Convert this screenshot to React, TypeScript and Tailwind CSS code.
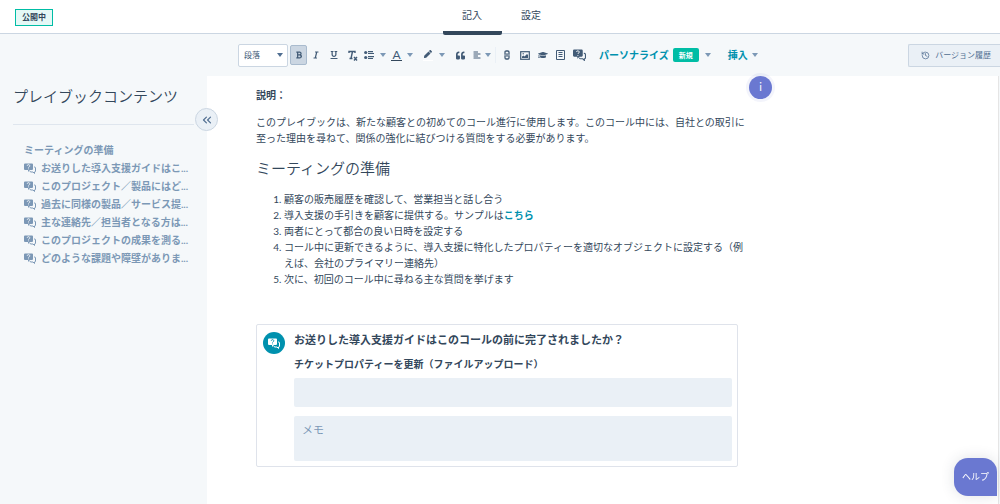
import type { ReactNode } from "react";
import { clsx } from "clsx";
import { ChevronsLeft, History } from "lucide-react";
import { FaBold, FaItalic, FaUnderline, FaQuoteLeft, FaAlignLeft, FaGraduationCap, FaPen } from "react-icons/fa";

const outline = [
  "お送りした導入支援ガイドはこ...",
  "このプロジェクト／製品にはど...",
  "過去に同様の製品／サービス提...",
  "主な連絡先／担当者となる方は...",
  "このプロジェクトの成果を測る...",
  "どのような課題や障壁がありま...",
];

function Caret({ className }: { className?: string }) {
  return (
    <svg viewBox="0 0 6 4" className={clsx("h-1 w-[6px] shrink-0", className ?? "fill-[#7c98b6]")} aria-hidden="true">
      <path d="M0 0h6L3 4z" />
    </svg>
  );
}

function QuestionIcon({ mark, className }: { mark: string; className?: string }) {
  return (
    <svg viewBox="0 0 24 22" className={clsx("shrink-0 fill-current", className)} aria-hidden="true">
      <path d="M2 1h14a2 2 0 0 1 2 2v9a2 2 0 0 1-2 2h-4l-4 4v-4H2a2 2 0 0 1-2-2V3a2 2 0 0 1 2-2z" />
      <path d="M20 8h1a2 2 0 0 1 2 2v6a2 2 0 0 1-2 2v3l-3-3h-4a2 2 0 0 1-2-2" fill="none" stroke="currentColor" strokeWidth="2" />
      <path d="M6.500 5.500a2.500 2.300 0 1 1 3.500 2.200c-.7.400-1 .700-1 1.500M9 11v1.600" fill="none" stroke={mark} strokeWidth="1.800" />
    </svg>
  );
}

function ClearIcon() {
  return (
    <svg viewBox="0 0 11 11" className="size-[11px]" fill="none" stroke="currentColor" strokeWidth="1.400" aria-hidden="true">
      <path d="M2 3V1.500h6V3M5.500 1.500 4 8.500M2.500 8.500h3M7 7l3 3.500M10 7l-3 3.500" />
    </svg>
  );
}

function ListIcon() {
  return (
    <svg viewBox="0 0 10 10" className="size-[10px] fill-current" aria-hidden="true">
      <circle cx="1.700" cy="2.500" r="1.600" />
      <circle cx="1.700" cy="7.500" r="1.600" />
      <path d="M4 1h5v1.200H4zM4 3h6v1H4zM4 6h6v1.200H4zM4 8h5v1H4z" />
    </svg>
  );
}

function LinkIcon() {
  return (
    <svg viewBox="0 0 6 10" className="h-[10px] w-[6px]" fill="none" stroke="currentColor" strokeWidth="1.300" aria-hidden="true">
      <path d="M1.800 4.200H1V2.200Q1 1 2.200 1h1.600Q5 1 5 2.200v2h-.8M1.800 5.800H1v2Q1 9 2.200 9h1.600Q5 9 5 7.800v-2h-.8M3 3.200v3.600" />
    </svg>
  );
}

function ImageIcon() {
  return (
    <svg viewBox="0 0 10 9" className="h-[9px] w-[10px]" aria-hidden="true">
      <rect x=".7" y=".7" width="8.600" height="7.600" fill="none" stroke="currentColor" strokeWidth="1.200" />
      <path d="M2 7V5.500l1.500-1 1 1L7 3l1 1v3z" fill="currentColor" />
      <circle cx="3.200" cy="2.800" r=".7" fill="currentColor" />
    </svg>
  );
}

function SnippetIcon() {
  return (
    <svg viewBox="0 0 9 10" className="h-[10px] w-[9px]" fill="none" stroke="currentColor" aria-hidden="true">
      <path d="M.500.500h8v9h-8zM2.500 2.500h4M2.500 4.500h4M2.500 6.500h4" />
    </svg>
  );
}

function Tool({ label, active, className, children }: { label: string; active?: boolean; className?: string; children: ReactNode }) {
  return (
    <button
      type="button"
      aria-label={label}
      className={clsx(
        "flex h-5 shrink-0 items-center justify-center",
        active && "rounded-[2px] border border-[#a9bbce] bg-[#cbd6e2]",
        className ?? "w-[18px]"
      )}
    >
      {children}
    </button>
  );
}

function Header() {
  return (
    <header className="grid h-[34px] shrink-0 grid-cols-[1fr_auto_1fr] border-b border-[#cbd6e2] bg-white pl-[15px]">
      <div className="flex items-center">
        <span className="border border-[#00bda5] bg-[#e5f8f6] px-[6px] text-[8px] leading-[15px] font-bold">公開中</span>
      </div>
      <nav className="-ml-3 flex text-[10px]">
        <a href="#edit" aria-current="page" className="flex h-[35px] w-[59px] items-center justify-center rounded-[2px] border-b-4 border-[#33475b]">
          記入
        </a>
        <a href="#settings" className="flex h-[35px] w-[59px] items-center justify-center border-b-4 border-transparent">
          設定
        </a>
      </nav>
    </header>
  );
}

function Sidebar() {
  return (
    <aside className="relative w-[207px] shrink-0 px-[13px] pt-[50px]">
      <h1 className="border-b border-[#dfe6ee] pb-4 text-[15px] leading-6 font-[350] whitespace-nowrap">プレイブックコンテンツ</h1>
      <button
        type="button"
        aria-label="サイドバーを閉じる"
        className="absolute top-[74px] -right-[11px] z-10 flex size-[23px] items-center justify-center rounded-full border border-[#cbd6e2] bg-[#eaf0f6] text-[#506e91]"
      >
        <ChevronsLeft size={14} strokeWidth={2} />
      </button>
      <nav className="mt-4 pl-[11px] text-[10px] leading-[18px] font-bold text-[#7c98b6]">
        <a href="#prep" className="block">ミーティングの準備</a>
        <ul>
          {outline.map((title) => (
            <li key={title}>
              <a href="#question" className="flex items-center gap-[5px] whitespace-nowrap">
                <QuestionIcon mark="#f5f8fa" className="h-[11px] w-3" />
                {title}
              </a>
            </li>
          ))}
        </ul>
      </nav>
    </aside>
  );
}

function Toolbar() {
  return (
    <div className="flex h-[42px] shrink-0 items-center pl-[31px] text-[#425b76]">
      <div className="relative mr-[2px] flex items-center">
        <select aria-label="スタイル" className="h-[23px] w-[50px] appearance-none rounded-[2px] border border-[#cbd6e2] bg-white pl-[5px] text-[8px]">
          <option>段落</option>
        </select>
        <Caret className="pointer-events-none absolute right-[5px] fill-[#506e91]" />
      </div>
      <Tool label="太字" active className="w-[17px]"><FaBold size={8} /></Tool>
      <Tool label="斜体"><FaItalic size={8} /></Tool>
      <Tool label="下線"><FaUnderline size={8} /></Tool>
      <Tool label="書式をクリア"><ClearIcon /></Tool>
      <Tool label="リスト" className="w-[27px] gap-[6px]"><ListIcon /><Caret /></Tool>
      <Tool label="文字色" className="w-[28px] gap-[5px]">
        <span className="border-b border-[#33475b] px-px text-[12px] leading-[11px]">A</span>
        <Caret />
      </Tool>
      <Tool label="背景色" className="ml-1 w-[27px] gap-[6px]">
        <span className="border-b border-white px-px pb-[2px]"><FaPen size={8} /></span>
        <Caret />
      </Tool>
      <Tool label="引用" className="ml-[4px] w-[18px]"><FaQuoteLeft size={9} /></Tool>
      <Tool label="配置" className="ml-[3px] w-[20px] gap-1"><FaAlignLeft size={8} /><Caret /></Tool>
      <span className="mr-[2px] ml-[3px] h-4 w-px shrink-0 bg-[#eaf0f6]" />
      <Tool label="リンク"><LinkIcon /></Tool>
      <Tool label="画像"><ImageIcon /></Tool>
      <Tool label="ナレッジ"><FaGraduationCap size={10} /></Tool>
      <Tool label="スニペット" className="w-[17px]"><SnippetIcon /></Tool>
      <Tool label="質問" className="mr-[9px] w-[21px]"><QuestionIcon mark="#f5f8fa" className="h-3 w-[13px]" /></Tool>
      <button type="button" className="flex shrink-0 items-center gap-1 text-[10px] font-bold text-[#0091ae]">
        パーソナライズ
        <span className="rounded-[2px] bg-[#00bda5] px-[6px] text-[7px] leading-[14px] font-bold text-white">新規</span>
        <span className="pl-[2px]"><Caret /></span>
      </button>
      <button type="button" className="ml-[17px] flex shrink-0 items-center gap-1 text-[10px] font-bold text-[#0091ae]">
        挿入
        <Caret />
      </button>
      <button type="button" className="ml-auto flex h-[23px] shrink-0 items-center gap-[5px] rounded-l-[2px] border border-r-0 border-[#cbd6e2] bg-[#eaf0f6] pr-[9px] pl-[12px] text-[8px] text-[#506e91]">
        <History size={9} />
        バージョン履歴
      </button>
    </div>
  );
}

function QuestionCard() {
  return (
    <section id="question" className="mt-[37px] mr-[10px] flex gap-[9px] rounded-[2px] border border-[#dfe3eb] pt-[7px] pr-[5px] pb-[5px] pl-[6px]">
      <span className="flex size-[22px] shrink-0 items-center justify-center rounded-full bg-[#0091ae] text-white">
        <QuestionIcon mark="#0091ae" className="h-[11px] w-3" />
      </span>
      <div className="flex-1">
        <h3 className="text-[11px] leading-4 font-bold">お送りした導入支援ガイドはこのコールの前に完了されましたか？</h3>
        <label htmlFor="guide-file" className="mt-2 block text-[10px] leading-4 font-bold">
          チケットプロパティーを更新（ファイルアップロード）
        </label>
        <input id="guide-file" type="text" className="mt-[6px] block h-[29px] w-full rounded-[2px] bg-[#eaf0f6] px-2 text-[11px]" />
        <textarea
          aria-label="メモ"
          placeholder="メモ"
          className="mt-[9px] block h-[45px] w-full resize-none rounded-[2px] bg-[#eaf0f6] px-2 py-[6px] text-[11px] leading-4 placeholder:text-[#7c98b6]"
        />
      </div>
    </section>
  );
}

export default function App() {
  return (
    <div className="flex min-h-screen flex-col bg-[#f5f8fa] font-['Lato','Noto_Sans_CJK_JP',sans-serif] text-[#33475b]">
      <Header />
      <div className="flex flex-1">
        <Sidebar />
        <div className="flex min-w-0 flex-1 flex-col">
          <Toolbar />
          <main className="relative mr-px flex-1 border-r border-[#e5e5e5] bg-white pt-[11px] pb-8 pl-[49px]">
            <article className="max-w-[492px] text-[10px] leading-4">
              <p className="font-bold">説明：</p>
              <p className="mt-[11px]">
                このプレイブックは、新たな顧客との初めてのコール進行に使用します。このコール中には、自社との取引に至った理由を尋ねて、関係の強化に結びつける質問をする必要があります。
              </p>
              <h2 id="prep" className="mt-3 text-[15px] leading-5 font-[350]">ミーティングの準備</h2>
              <ol className="mt-[13px] list-decimal pl-7">
                <li>顧客の販売履歴を確認して、営業担当と話し合う</li>
                <li>
                  導入支援の手引きを顧客に提供する。サンプルは<a href="#sample" className="font-bold text-[#0091ae]">こちら</a>
                </li>
                <li>両者にとって都合の良い日時を設定する</li>
                <li>コール中に更新できるように、導入支援に特化したプロパティーを適切なオブジェクトに設定する（例えば、会社のプライマリー連絡先）</li>
                <li>次に、初回のコール中に尋ねる主な質問を挙げます</li>
              </ol>
              <QuestionCard />
            </article>
            <button
              type="button"
              aria-label="情報"
              className="absolute top-0 left-[542px] flex size-[23px] items-center justify-center rounded-full bg-[#6a78d1] text-[11px] text-white ring-3 ring-[#6a78d1]/8"
            >
              i
            </button>
          </main>
        </div>
      </div>
      <button
        type="button"
        className="fixed right-[3px] bottom-2 h-[38px] w-[43px] rounded-[14px] rounded-br-none bg-[#6a78d1] text-[9px] text-white shadow-[0_0_14px_rgba(45,62,80,0.15)]"
      >
        ヘルプ
      </button>
    </div>
  );
}
